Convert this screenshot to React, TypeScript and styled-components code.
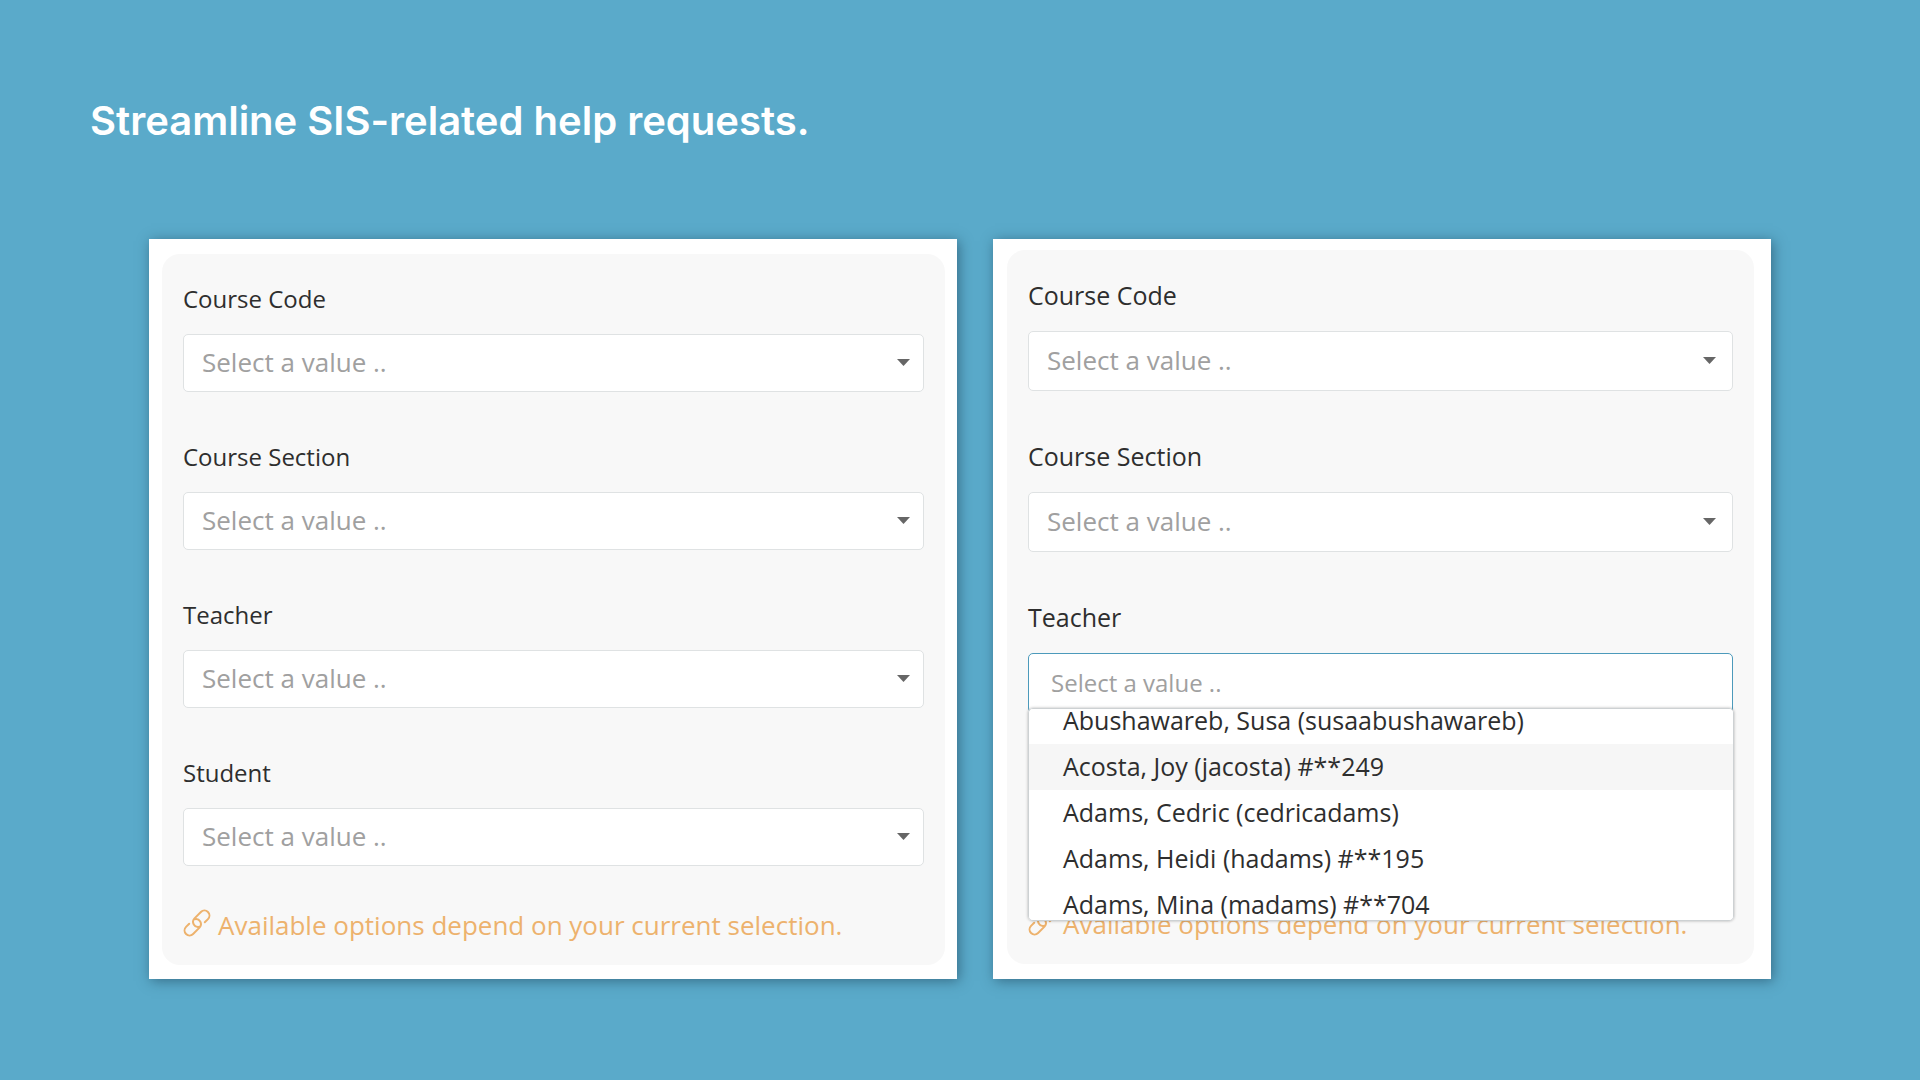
import React, { useEffect, useId, useRef } from "react";
import styled, { createGlobalStyle, css } from "styled-components";

const GlobalStyle = createGlobalStyle`
  *, *::before, *::after {
    box-sizing: border-box;
  }

  body {
    margin: 0;
    background: #5aaaca;
    font-family: "Open Sans", "Noto Sans", sans-serif;
    color: #2e2e2e;
  }
`;

type Size = "regular" | "large";

const Slide = styled.main`
  min-height: 100vh;
  padding: 97px 149px 96px;
`;

const Title = styled.h1`
  margin: 0 0 94px -59px;
  font-family: Inter, "Open Sans", sans-serif;
  font-size: 40px;
  font-weight: 600;
  line-height: 48px;
  color: #fff;
`;

const Cards = styled.div`
  display: grid;
  grid-template-columns: 808fr 778fr;
  gap: 36px;
`;

const Card = styled.section<{ $size: Size }>`
  padding: ${({ $size }) => ($size === "large" ? "11px 17px 14px 14px" : "15px 12px 14px 13px")};
  background: #fff;
  box-shadow: 2px 2px 12px rgba(20, 50, 70, 0.5);
`;

const Panel = styled.form<{ $size: Size }>`
  display: flex;
  flex-direction: column;
  min-height: ${({ $size }) => ($size === "large" ? "714px" : "711px")};
  padding: 29px 21px 24px;
  border-radius: 18px;
  background: #f8f8f8;
`;

const FieldBox = styled.div<{ $size: Size }>`
  display: flex;
  flex-direction: column;
  gap: ${({ $size }) => ($size === "large" ? "20px" : "19px")};

  & + & {
    margin-top: 49px;
  }
`;

const Label = styled.label<{ $size: Size }>`
  font-size: ${({ $size }) => ($size === "large" ? "25px" : "24px")};
  line-height: 32px;
`;

const Control = styled.div`
  position: relative;
  display: flex;
`;

const boxed = css<{ $size: Size }>`
  flex: 1;
  min-width: 0;
  height: ${({ $size }) => ($size === "large" ? "60px" : "58px")};
  margin: 0;
  border: 1px solid #dfe2e3;
  border-radius: 5px;
  background: #fff;
  font-family: inherit;
  outline: none;
`;

const Select = styled.select`
  ${boxed}
  appearance: none;
  padding: 0 48px 2px 18px;
  font-size: 26px;
  color: #a0a0a0;
`;

const SearchInput = styled.input`
  ${boxed}
  padding: 0 22px 2px;
  border-color: #4c9abb;
  font-size: 24px;
  color: #2e2e2e;

  &::placeholder {
    color: #a0a0a0;
    opacity: 1;
  }
`;

const Caret = styled.svg<{ $size: Size }>`
  position: absolute;
  top: 50%;
  right: ${({ $size }) => ($size === "large" ? "17px" : "14px")};
  width: 13px;
  height: 7px;
  margin-top: -4px;
  fill: #666;
  pointer-events: none;
`;

const Menu = styled.ul`
  position: absolute;
  top: 55px;
  left: 0;
  right: -1px;
  z-index: 1;
  height: 213px;
  margin: 0;
  padding: 0;
  overflow-y: auto;
  scrollbar-width: none;
  list-style: none;
  border: 1px solid #cdd1d3;
  border-radius: 5px;
  background: #fff;
  box-shadow: 0 0 3px rgba(0, 0, 0, 0.3);
`;

const Option = styled.li<{ $active: boolean }>`
  padding: 0 34px 2px;
  font-size: 25px;
  line-height: 44px;
  white-space: nowrap;
  background: ${({ $active }) => ($active ? "#f6f6f6" : "#fff")};
`;

const Hint = styled.p`
  display: flex;
  align-items: flex-start;
  gap: 7px;
  margin: auto 0 0;
  font-size: 26px;
  line-height: 32px;
  color: #edb26d;
`;

const LinkIcon = styled.svg`
  flex: none;
  width: 28px;
  height: 28px;
  fill: none;
  stroke: currentColor;
  stroke-width: 2;
  stroke-linecap: round;
`;

const TEACHERS = [
  "Abushawareb, Susa (susaabushawareb)",
  "Acosta, Joy (jacosta) #**249",
  "Adams, Cedric (cedricadams)",
  "Adams, Heidi (hadams) #**195",
  "Adams, Mina (madams) #**704",
];

function SelectField({ label, size }: { label: string; size: Size }) {
  const id = useId();
  return (
    <FieldBox $size={size}>
      <Label $size={size} htmlFor={id}>
        {label}
      </Label>
      <Control>
        <Select id={id} $size={size}>
          <option>Select a value ..</option>
        </Select>
        <Caret $size={size} viewBox="0 0 13 7" aria-hidden="true">
          <path d="M0 0h13L6.500 7z" />
        </Caret>
      </Control>
    </FieldBox>
  );
}

function TeacherSearch({ size }: { size: Size }) {
  const id = useId();
  const menu = useRef<HTMLUListElement>(null);

  useEffect(() => {
    if (menu.current) menu.current.scrollTop = 11;
  }, []);

  return (
    <FieldBox $size={size}>
      <Label $size={size} htmlFor={id}>
        Teacher
      </Label>
      <Control>
        <SearchInput
          id={id}
          $size={size}
          role="combobox"
          aria-expanded="true"
          aria-controls={`${id}-menu`}
          placeholder="Select a value .."
        />
        <Menu id={`${id}-menu`} role="listbox" ref={menu}>
          {TEACHERS.map((name, index) => (
            <Option key={name} role="option" aria-selected={index === 1} $active={index === 1}>
              {name}
            </Option>
          ))}
        </Menu>
      </Control>
    </FieldBox>
  );
}

function SelectionHint() {
  return (
    <Hint>
      <LinkIcon viewBox="-14 -14 28 28" aria-hidden="true">
        <g transform="rotate(-45)">
          <path d="M6 5H10.500A5 5 0 0 0 10.500-5H1.500A5 5 0 0 0-1 4.300" />
          <path d="M-6-5H-10.500A5 5 0 0 0-10.500 5H-1.500A5 5 0 0 0 1-4.300" />
        </g>
      </LinkIcon>
      Available options depend on your current selection.
    </Hint>
  );
}

export default function App() {
  return (
    <>
      <GlobalStyle />
      <Slide>
        <Title>Streamline SIS-related help requests.</Title>
        <Cards>
          <Card $size="regular">
            <Panel $size="regular">
              {["Course Code", "Course Section", "Teacher", "Student"].map((label) => (
                <SelectField key={label} label={label} size="regular" />
              ))}
              <SelectionHint />
            </Panel>
          </Card>
          <Card $size="large">
            <Panel $size="large">
              {["Course Code", "Course Section"].map((label) => (
                <SelectField key={label} label={label} size="large" />
              ))}
              <TeacherSearch size="large" />
              <SelectionHint />
            </Panel>
          </Card>
        </Cards>
      </Slide>
    </>
  );
}
